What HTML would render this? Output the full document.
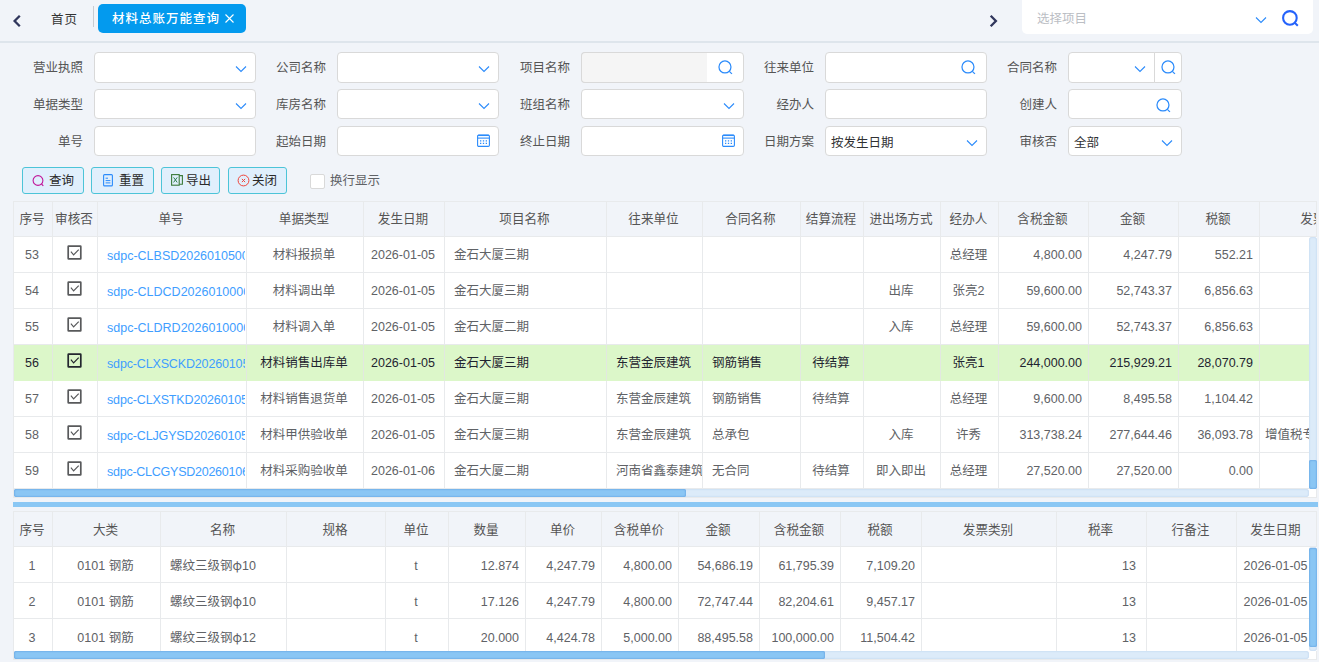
<!DOCTYPE html><html lang="zh"><head><meta charset="utf-8"><title>材料总账万能查询</title><style>
*{box-sizing:border-box;margin:0;padding:0}
html,body{width:1319px;height:662px;overflow:hidden}
body{background:#f1f4f9;font-family:"Liberation Sans", "Noto Sans CJK SC", sans-serif;font-size:13px;color:#606266;position:relative}
.abs{position:absolute}
#topline{left:0;top:41px;width:1319px;height:2px;background:#dee5ec}
.nav{font-size:22px;font-weight:bold;color:#2b2f4a}
#home{left:51px;top:10px;font-size:12.5px;letter-spacing:1px;color:#333;line-height:20px}
#sep{left:93px;top:6px;width:1px;height:21px;background:#c9ccd1}
#tab{left:98px;top:4px;width:148px;height:29px;background:#039aee;border-radius:5px;color:#fff;font-size:12.5px;letter-spacing:1px;line-height:31px;padding-left:14px;font-weight:500;white-space:nowrap}
#proj{left:1022px;top:0;width:291px;height:34px;background:#fff;border-radius:0 0 5px 5px}
#proj span{position:absolute;left:15px;top:9px;font-size:12.5px;color:#bbbec4;line-height:20px}
.lbl{position:absolute;width:90px;text-align:right;font-size:12.5px;line-height:30px;height:30px;margin-top:1px;color:#555;white-space:nowrap}
.inp{position:absolute;height:30px;background:#fff;border:1px solid #d9d9d9;border-radius:4px;font-size:12.5px;line-height:32px;color:#303133;padding-left:5px;white-space:nowrap}
.inp.dis{background:#f1f3f5}
.inp svg{position:absolute}
.btn{position:absolute;top:167px;height:27px;border:1px solid #4cc4d8;background:#e0effc;border-radius:3px;font-size:12.5px;line-height:27px;color:#2a2a2a;white-space:nowrap}
.btn svg{position:absolute}
.btn span{position:absolute;top:0}
#chk{left:310px;top:174px;width:15px;height:15px;background:#fff;border:1px solid #d9d9d9;border-radius:2px}
#chkl{left:330px;top:171px;line-height:20px;font-size:12.5px;color:#606266}
.tbl{position:absolute;left:13px;overflow:hidden;background:#fff;border-right:1px solid #e8eaec}
table{border-collapse:separate;border-spacing:0;table-layout:fixed}
td,th{height:36px;padding-bottom:2px !important;border-right:1px solid #e8eaec;border-bottom:1px solid #e8eaec;font-weight:normal;white-space:nowrap;overflow:hidden;padding:0 9px;text-align:left;vertical-align:middle}
th{background:#f1f4f9;font-size:12.6px;color:#555;text-align:center;padding:0 2px 0 0;height:35px;padding-bottom:4px !important}
td{font-size:12.5px;color:#606266;background:#fff}
td.c{text-align:center;padding:0 2px 0 0}
td.r{text-align:right;padding:0 6px 0 0}
td.r2{padding-right:10px}
td.n{padding-bottom:0 !important}
.t2 td{padding-bottom:0 !important}
.t2 th{padding-bottom:2px !important}
.t2 td.n{padding-top:2px}
.phi{font-family:"Noto Sans CJK SC",sans-serif}
td a{color:#409eff;text-decoration:none}
.lkw{overflow:hidden;margin-right:-8px;padding-top:2px;margin-bottom:-2px}
tr.sel td{background:#dcf7c9;color:#1f2430;border-bottom-color:#dcf7c9;border-right-color:#e2e8e0}
tr.sel .cb rect{fill:none;stroke:#23262e}
tr.sel .cb path{stroke:#23262e}
.cb{display:inline-block;position:relative;top:-1px;left:0.5px;vertical-align:middle}
.sbt{position:absolute;background:#dcebf9;border-radius:3px;box-shadow:inset 0 0 2px rgba(150,185,225,.6)}
.sbh{position:absolute;background:#8ac6f4;border-radius:2px;box-shadow:inset 0 0 2px rgba(50,120,205,.75)}
</style></head><body>
<svg class="abs" style="left:12px;top:14px" width="10" height="14" viewBox="0 0 10 14"><path d="M7.8 1.7 L2.6 7 L7.8 12.3" fill="none" stroke="#30365c" stroke-width="2.3"/></svg>
<div class="abs" id="home">首页</div><div class="abs" id="sep"></div>
<div class="abs" id="tab">材料总账万能查询<svg class="abs" style="left:127px;top:10px" width="9" height="9" viewBox="0 0 9 9"><path d="M0.5 0.5L8.5 8.5M8.5 0.5L0.5 8.5" stroke="#fff" stroke-width="1.1"/></svg></div>
<svg class="abs" style="left:988px;top:14px" width="10" height="14" viewBox="0 0 10 14"><path d="M2.7 1.7 L7.9 7 L2.7 12.3" fill="none" stroke="#30365c" stroke-width="2.3"/></svg>
<div class="abs" id="proj"><span>选择项目</span><svg class="abs" style="left:233px;top:16px" width="12" height="8" viewBox="0 0 12 8"><path d="M1 1.5 L6 6.5 L11 1.5" fill="none" stroke="#2b8bfb" stroke-width="1.1"/></svg><svg class="abs" style="left:260.4px;top:9.5px" width="17" height="17" viewBox="0 0 14 14"><circle cx="6.5" cy="6.5" r="5.6" fill="none" stroke="#2462fb" stroke-width="1.7"/><path d="M10.6 10.6 L13 13" stroke="#2462fb" stroke-width="1.7" fill="none"/></svg></div>
<div class="abs" id="topline"></div>
<div class="lbl" style="left:-7px;top:52px">营业执照</div>
<div class="inp" style="left:94px;top:52px;width:162px;height:31px"><svg style="left:140px;top:12px" width="12" height="8" viewBox="0 0 12 8"><path d="M1 1.5 L6 6.5 L11 1.5" fill="none" stroke="#2b8bfb" stroke-width="1.1"/></svg></div>
<div class="lbl" style="left:236px;top:52px">公司名称</div>
<div class="inp" style="left:337px;top:52px;width:162px;height:31px"><svg style="left:140px;top:12px" width="12" height="8" viewBox="0 0 12 8"><path d="M1 1.5 L6 6.5 L11 1.5" fill="none" stroke="#2b8bfb" stroke-width="1.1"/></svg></div>
<div class="lbl" style="left:480px;top:52px">项目名称</div>
<div class="inp" style="left:581px;top:52px;width:163px;height:31px"><div class="abs" style="left:-1px;top:-1px;width:126px;height:31px;background:#f5f5f5;border:1px solid #d9d9d9;border-right:0;border-radius:4px 0 0 4px"></div><svg style="left:136px;top:6.5px" width="15" height="15" viewBox="0 0 14 14"><circle cx="6.5" cy="6.5" r="5.6" fill="none" stroke="#2b8bfb" stroke-width="1.15"/><path d="M10.6 10.6 L13 13" stroke="#2b8bfb" stroke-width="1.15" fill="none"/></svg></div>
<div class="lbl" style="left:724px;top:52px">往来单位</div>
<div class="inp" style="left:825px;top:52px;width:162px;height:31px"><svg style="left:135px;top:6.5px" width="15" height="15" viewBox="0 0 14 14"><circle cx="6.5" cy="6.5" r="5.6" fill="none" stroke="#2b8bfb" stroke-width="1.15"/><path d="M10.6 10.6 L13 13" stroke="#2b8bfb" stroke-width="1.15" fill="none"/></svg></div>
<div class="lbl" style="left:967px;top:52px">合同名称</div>
<div class="inp" style="left:1068px;top:52px;width:87px;height:31px;border-radius:4px 0 0 4px"><svg style="left:65px;top:12px" width="12" height="8" viewBox="0 0 12 8"><path d="M1 1.5 L6 6.5 L11 1.5" fill="none" stroke="#2b8bfb" stroke-width="1.1"/></svg></div>
<div class="inp" style="left:1154px;top:52px;width:28px;height:31px;border-radius:0 4px 4px 0"><svg style="left:5.8px;top:6.5px" width="15" height="15" viewBox="0 0 14 14"><circle cx="6.5" cy="6.5" r="5.6" fill="none" stroke="#2b8bfb" stroke-width="1.15"/><path d="M10.6 10.6 L13 13" stroke="#2b8bfb" stroke-width="1.15" fill="none"/></svg></div>
<div class="lbl" style="left:-7px;top:89px">单据类型</div>
<div class="inp" style="left:94px;top:89px;width:162px;height:30px"><svg style="left:140px;top:12px" width="12" height="8" viewBox="0 0 12 8"><path d="M1 1.5 L6 6.5 L11 1.5" fill="none" stroke="#2b8bfb" stroke-width="1.1"/></svg></div>
<div class="lbl" style="left:236px;top:89px">库房名称</div>
<div class="inp" style="left:337px;top:89px;width:162px;height:30px"><svg style="left:140px;top:12px" width="12" height="8" viewBox="0 0 12 8"><path d="M1 1.5 L6 6.5 L11 1.5" fill="none" stroke="#2b8bfb" stroke-width="1.1"/></svg></div>
<div class="lbl" style="left:480px;top:89px">班组名称</div>
<div class="inp" style="left:581px;top:89px;width:163px;height:30px"><svg style="left:141px;top:12px" width="12" height="8" viewBox="0 0 12 8"><path d="M1 1.5 L6 6.5 L11 1.5" fill="none" stroke="#2b8bfb" stroke-width="1.1"/></svg></div>
<div class="lbl" style="left:724px;top:89px">经办人</div>
<div class="inp" style="left:825px;top:89px;width:162px;height:30px"></div>
<div class="lbl" style="left:967px;top:89px">创建人</div>
<div class="inp" style="left:1068px;top:89px;width:114px;height:30px"><svg style="left:87px;top:7.5px" width="15" height="15" viewBox="0 0 14 14"><circle cx="6.5" cy="6.5" r="5.6" fill="none" stroke="#2b8bfb" stroke-width="1.15"/><path d="M10.6 10.6 L13 13" stroke="#2b8bfb" stroke-width="1.15" fill="none"/></svg></div>
<div class="lbl" style="left:-7px;top:126px">单号</div>
<div class="inp" style="left:94px;top:126px;width:162px;height:30px"></div>
<div class="lbl" style="left:236px;top:126px">起始日期</div>
<div class="inp" style="left:337px;top:126px;width:162px;height:30px"><svg style="left:139px;top:7px" width="13" height="13" viewBox="0 0 13 13"><rect x="0.6" y="1.1" width="11.8" height="11.3" rx="1.2" fill="none" stroke="#2b8bfb" stroke-width="1.1"/><path d="M0.6 4.1H12.4" stroke="#2b8bfb" stroke-width="1.1" fill="none"/><path d="M1 1.4H12" stroke="#2b8bfb" stroke-width="1.3" fill="none"/><path d="M3 6.9h1.3M5.85 6.9h1.3M8.7 6.9h1.3M3 9.4h1.3M5.85 9.4h1.3M8.7 9.4h1.3" stroke="#2b8bfb" stroke-width="1.1"/></svg></div>
<div class="lbl" style="left:480px;top:126px">终止日期</div>
<div class="inp" style="left:581px;top:126px;width:163px;height:30px"><svg style="left:140px;top:7px" width="13" height="13" viewBox="0 0 13 13"><rect x="0.6" y="1.1" width="11.8" height="11.3" rx="1.2" fill="none" stroke="#2b8bfb" stroke-width="1.1"/><path d="M0.6 4.1H12.4" stroke="#2b8bfb" stroke-width="1.1" fill="none"/><path d="M1 1.4H12" stroke="#2b8bfb" stroke-width="1.3" fill="none"/><path d="M3 6.9h1.3M5.85 6.9h1.3M8.7 6.9h1.3M3 9.4h1.3M5.85 9.4h1.3M8.7 9.4h1.3" stroke="#2b8bfb" stroke-width="1.1"/></svg></div>
<div class="lbl" style="left:724px;top:126px">日期方案</div>
<div class="inp" style="left:825px;top:126px;width:162px;height:30px">按发生日期<svg style="left:140px;top:12px" width="12" height="8" viewBox="0 0 12 8"><path d="M1 1.5 L6 6.5 L11 1.5" fill="none" stroke="#2b8bfb" stroke-width="1.1"/></svg></div>
<div class="lbl" style="left:967px;top:126px">审核否</div>
<div class="inp" style="left:1068px;top:126px;width:114px;height:30px">全部<svg style="left:92px;top:12px" width="12" height="8" viewBox="0 0 12 8"><path d="M1 1.5 L6 6.5 L11 1.5" fill="none" stroke="#2b8bfb" stroke-width="1.1"/></svg></div>
<div class="btn" style="left:22px;width:62px"><svg style="left:9px;top:6px" width="13" height="13" viewBox="0 0 13 13"><circle cx="6" cy="6.5" r="4.9" fill="none" stroke="#c0189a" stroke-width="1.1"/><path d="M9.5 10L11.3 11.8" stroke="#c0189a" stroke-width="1.1"/></svg><span style="left:26px">查询</span></div>
<div class="btn" style="left:91px;width:63px"><svg style="left:11px;top:6px" width="10" height="13" viewBox="0 0 10 13"><rect x="0.6" y="0.6" width="8.8" height="11.3" rx="1" fill="none" stroke="#2b8bfb" stroke-width="1.1"/><path d="M2.6 4.2h2.4M2.6 6.6h4.8M2.6 8.9h4.8" stroke="#2b8bfb" stroke-width="1"/></svg><span style="left:27px">重置</span></div>
<div class="btn" style="left:161px;width:59px"><svg style="left:9px;top:6px" width="13" height="12" viewBox="0 0 13 12"><rect x="0.6" y="0.6" width="7.6" height="10.6" fill="none" stroke="#3b7a3a" stroke-width="1.1"/><path d="M8.2 1.6H11.4V10.2H8.2" fill="none" stroke="#3b7a3a" stroke-width="1.1"/><path d="M2.6 3.4L6.2 8.4M6.2 3.4L2.6 8.4" stroke="#2e7d4f" stroke-width="1"/></svg><span style="left:24px">导出</span></div>
<div class="btn" style="left:228px;width:59px"><svg style="left:8px;top:6px" width="13" height="13" viewBox="0 0 13 13"><circle cx="6.5" cy="6.5" r="5.4" fill="none" stroke="#f0443a" stroke-width="1"/><path d="M4.9 4.9L8.1 8.1M8.1 4.9L4.9 8.1" stroke="#f0443a" stroke-width="1"/></svg><span style="left:23px">关闭</span></div>
<div class="abs" id="chk"></div><div class="abs" id="chkl">换行显示</div>
<div class="tbl" style="top:201px;width:1304px;height:288px;border-left:1px solid #e8eaec;border-top:1px solid #e8eaec"><table style="width:1380px"><colgroup><col style="width:39px"><col style="width:45px"><col style="width:149px"><col style="width:117px"><col style="width:81px"><col style="width:162px"><col style="width:96px"><col style="width:98px"><col style="width:63px"><col style="width:77px"><col style="width:58px"><col style="width:90px"><col style="width:90px"><col style="width:81px"><col style="width:134px"></colgroup><tr><th>序号</th><th>审核否</th><th>单号</th><th>单据类型</th><th>发生日期</th><th>项目名称</th><th>往来单位</th><th>合同名称</th><th>结算流程</th><th>进出场方式</th><th>经办人</th><th>含税金额</th><th>金额</th><th>税额</th><th>发票类别</th></tr><tr><td class="c n">53</td><td class="c"><svg class="cb" width="15" height="15" viewBox="0 0 15 15"><rect x="1.2" y="1.2" width="12.6" height="12.6" rx="0.4" fill="#fff" stroke="#58595b" stroke-width="1.7"/><path d="M3.9 6.7L6.6 9.9L11.7 4.7" fill="none" stroke="#58595b" stroke-width="1.2"/></svg></td><td><div class="lkw"><a>sdpc-CLBSD20260105001</a></div></td><td class="c">材料报损单</td><td class="c n">2026-01-05</td><td>金石大厦三期</td><td></td><td></td><td class="c"></td><td class="c"></td><td class="c">总经理</td><td class="r n">4,800.00</td><td class="r n">4,247.79</td><td class="r n">552.21</td><td></td></tr><tr><td class="c n">54</td><td class="c"><svg class="cb" width="15" height="15" viewBox="0 0 15 15"><rect x="1.2" y="1.2" width="12.6" height="12.6" rx="0.4" fill="#fff" stroke="#58595b" stroke-width="1.7"/><path d="M3.9 6.7L6.6 9.9L11.7 4.7" fill="none" stroke="#58595b" stroke-width="1.2"/></svg></td><td><div class="lkw"><a>sdpc-CLDCD20260100001</a></div></td><td class="c">材料调出单</td><td class="c n">2026-01-05</td><td>金石大厦三期</td><td></td><td></td><td class="c"></td><td class="c">出库</td><td class="c">张亮2</td><td class="r n">59,600.00</td><td class="r n">52,743.37</td><td class="r n">6,856.63</td><td></td></tr><tr><td class="c n">55</td><td class="c"><svg class="cb" width="15" height="15" viewBox="0 0 15 15"><rect x="1.2" y="1.2" width="12.6" height="12.6" rx="0.4" fill="#fff" stroke="#58595b" stroke-width="1.7"/><path d="M3.9 6.7L6.6 9.9L11.7 4.7" fill="none" stroke="#58595b" stroke-width="1.2"/></svg></td><td><div class="lkw"><a>sdpc-CLDRD20260100001</a></div></td><td class="c">材料调入单</td><td class="c n">2026-01-05</td><td>金石大厦二期</td><td></td><td></td><td class="c"></td><td class="c">入库</td><td class="c">总经理</td><td class="r n">59,600.00</td><td class="r n">52,743.37</td><td class="r n">6,856.63</td><td></td></tr><tr class="sel"><td class="c n">56</td><td class="c"><svg class="cb" width="15" height="15" viewBox="0 0 15 15"><rect x="1.2" y="1.2" width="12.6" height="12.6" rx="0.4" fill="#fff" stroke="#58595b" stroke-width="1.7"/><path d="M3.9 6.7L6.6 9.9L11.7 4.7" fill="none" stroke="#58595b" stroke-width="1.2"/></svg></td><td><div class="lkw"><a style="letter-spacing:-0.15px">sdpc-CLXSCKD2026010501</a></div></td><td class="c">材料销售出库单</td><td class="c n">2026-01-05</td><td>金石大厦三期</td><td>东营金辰建筑</td><td>钢筋销售</td><td class="c">待结算</td><td class="c"></td><td class="c">张亮1</td><td class="r n">244,000.00</td><td class="r n">215,929.21</td><td class="r n">28,070.79</td><td></td></tr><tr><td class="c n">57</td><td class="c"><svg class="cb" width="15" height="15" viewBox="0 0 15 15"><rect x="1.2" y="1.2" width="12.6" height="12.6" rx="0.4" fill="#fff" stroke="#58595b" stroke-width="1.7"/><path d="M3.9 6.7L6.6 9.9L11.7 4.7" fill="none" stroke="#58595b" stroke-width="1.2"/></svg></td><td><div class="lkw"><a style="letter-spacing:-0.15px">sdpc-CLXSTKD2026010501</a></div></td><td class="c">材料销售退货单</td><td class="c n">2026-01-05</td><td>金石大厦三期</td><td>东营金辰建筑</td><td>钢筋销售</td><td class="c">待结算</td><td class="c"></td><td class="c">总经理</td><td class="r n">9,600.00</td><td class="r n">8,495.58</td><td class="r n">1,104.42</td><td></td></tr><tr><td class="c n">58</td><td class="c"><svg class="cb" width="15" height="15" viewBox="0 0 15 15"><rect x="1.2" y="1.2" width="12.6" height="12.6" rx="0.4" fill="#fff" stroke="#58595b" stroke-width="1.7"/><path d="M3.9 6.7L6.6 9.9L11.7 4.7" fill="none" stroke="#58595b" stroke-width="1.2"/></svg></td><td><div class="lkw"><a style="letter-spacing:-0.15px">sdpc-CLJGYSD2026010501</a></div></td><td class="c">材料甲供验收单</td><td class="c n">2026-01-05</td><td>金石大厦三期</td><td>东营金辰建筑</td><td>总承包</td><td class="c"></td><td class="c">入库</td><td class="c">许秀</td><td class="r n">313,738.24</td><td class="r n">277,644.46</td><td class="r n">36,093.78</td><td><span style="margin-left:-4px">增值税专用发票</span></td></tr><tr><td class="c n">59</td><td class="c"><svg class="cb" width="15" height="15" viewBox="0 0 15 15"><rect x="1.2" y="1.2" width="12.6" height="12.6" rx="0.4" fill="#fff" stroke="#58595b" stroke-width="1.7"/><path d="M3.9 6.7L6.6 9.9L11.7 4.7" fill="none" stroke="#58595b" stroke-width="1.2"/></svg></td><td><div class="lkw"><a style="letter-spacing:-0.25px">sdpc-CLCGYSD2026010601</a></div></td><td class="c">材料采购验收单</td><td class="c n">2026-01-06</td><td>金石大厦二期</td><td>河南省鑫泰建筑</td><td>无合同</td><td class="c">待结算</td><td class="c">即入即出</td><td class="c">总经理</td><td class="r n">27,520.00</td><td class="r n">27,520.00</td><td class="r n">0.00</td><td></td></tr></table></div>
<div class="abs" style="left:1309px;top:237px;width:8px;height:260px;background:#fff"></div>
<div class="sbt" style="left:1309px;top:237px;width:8px;height:252px"></div>
<div class="sbh" style="left:1309px;top:460px;width:8px;height:29px"></div>
<div class="abs" style="left:13px;top:489px;width:1304px;height:9px;background:#fff;border:1px solid #e8eaec;border-top:0"></div>
<div class="sbt" style="left:14px;top:489px;width:1295px;height:8px"></div>
<div class="sbh" style="left:14px;top:489px;width:672px;height:8px"></div>
<div class="abs" style="left:13px;top:502px;width:1305px;height:5px;background:#8ac7f4"></div>
<div class="tbl t2" style="top:511px;width:1304px;height:141px;border-left:1px solid #e8eaec;border-top:1px solid #e8eaec"><table style="width:1303px"><colgroup><col style="width:39px"><col style="width:108px"><col style="width:126px"><col style="width:99px"><col style="width:63px"><col style="width:77px"><col style="width:76px"><col style="width:77px"><col style="width:81px"><col style="width:81px"><col style="width:81px"><col style="width:135px"><col style="width:90px"><col style="width:90px"><col style="width:80px"></colgroup><tr><th>序号</th><th>大类</th><th>名称</th><th>规格</th><th>单位</th><th>数量</th><th>单价</th><th>含税单价</th><th>金额</th><th>含税金额</th><th>税额</th><th>发票类别</th><th>税率</th><th>行备注</th><th>发生日期</th></tr><tr><td class="c n">1</td><td class="c">0101 钢筋</td><td>螺纹三级钢<span class="phi">φ</span>10</td><td></td><td class="c n">t</td><td class="r n">12.874</td><td class="r n">4,247.79</td><td class="r n">4,800.00</td><td class="r n">54,686.19</td><td class="r n">61,795.39</td><td class="r n">7,109.20</td><td></td><td class="r r2 n">13</td><td></td><td class="c n">2026-01-05</td></tr><tr><td class="c n">2</td><td class="c">0101 钢筋</td><td>螺纹三级钢<span class="phi">φ</span>10</td><td></td><td class="c n">t</td><td class="r n">17.126</td><td class="r n">4,247.79</td><td class="r n">4,800.00</td><td class="r n">72,747.44</td><td class="r n">82,204.61</td><td class="r n">9,457.17</td><td></td><td class="r r2 n">13</td><td></td><td class="c n">2026-01-05</td></tr><tr><td class="c n">3</td><td class="c">0101 钢筋</td><td>螺纹三级钢<span class="phi">φ</span>12</td><td></td><td class="c n">t</td><td class="r n">20.000</td><td class="r n">4,424.78</td><td class="r n">5,000.00</td><td class="r n">88,495.58</td><td class="r n">100,000.00</td><td class="r n">11,504.42</td><td></td><td class="r r2 n">13</td><td></td><td class="c n">2026-01-05</td></tr></table></div>
<div class="abs" style="left:1309px;top:547px;width:8px;height:105px;background:#fff"></div>
<div class="sbt" style="left:1309px;top:547px;width:8px;height:104px"></div>
<div class="sbh" style="left:1309px;top:548px;width:8px;height:99px"></div>
<div class="abs" style="left:13px;top:651px;width:1304px;height:9px;background:#fff;border:1px solid #e8eaec;border-top:0"></div>
<div class="sbt" style="left:14px;top:651px;width:1295px;height:8px"></div>
<div class="sbh" style="left:14px;top:651px;width:811px;height:8px"></div>
</body></html>
